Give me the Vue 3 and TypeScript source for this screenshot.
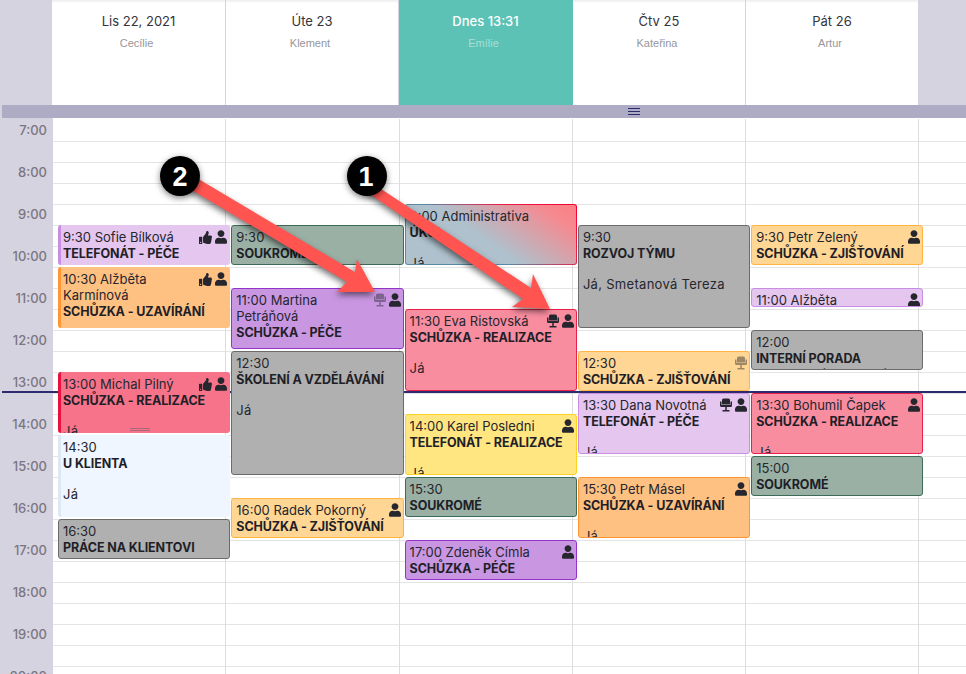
<template>
  <div class="calendar">
    <div class="head">
      <div class="corner"></div>
      <div v-for="d in days" :key="d.label" class="head-day" :class="{ today: d.today }">
        <div class="head-label">{{ d.label }}</div>
        <div class="head-name">{{ d.name }}</div>
      </div>
      <div class="corner"></div>
    </div>

    <div class="splitter">
      <svg width="12" height="8" viewBox="0 0 12 8">
        <path d="M0 .5h12M0 3.5h12M0 6.5h12" stroke="#2e2a6e" stroke-width="1" />
      </svg>
    </div>

    <div class="body">
      <div class="hours">
        <div v-for="h in hours" :key="h" class="hour">{{ h }}:00</div>
      </div>

      <div v-for="(col, i) in columns" :key="i" class="day">
        <div v-for="n in 27" :key="n" class="slot"></div>
        <div
          v-for="ev in col"
          :key="ev.time + ev.title"
          class="event"
          :class="[ev.kind, { past: ev.past }]"
          :style="eventBox(ev)"
        >
          <div class="icons">
            <svg v-if="ev.chair" class="chair" :class="{ dim: ev.dim }" viewBox="0 0 24 26">
              <path d="M7 0h10a3 3 0 0 1 3 3v9H4V3a3 3 0 0 1 3-3zM0 6h3v7h18V6h3v8a3 3 0 0 1-3 3H3a3 3 0 0 1-3-3zM10.500 17h3v6H19v3H5v-3h5.500z" />
            </svg>
            <svg v-if="ev.thumb" class="thumb" viewBox="0 0 512 512">
              <path d="M104 224H24c-13.255 0-24 10.745-24 24v240c0 13.255 10.745 24 24 24h80c13.255 0 24-10.745 24-24V248c0-13.255-10.745-24-24-24zM64 472c-13.255 0-24-10.745-24-24s10.745-24 24-24 24 10.745 24 24-10.745 24-24 24zM384 81.452c0 42.416-25.970 66.208-33.277 94.548h101.723c33.397 0 59.397 27.746 59.553 58.098.084 17.938-7.546 37.249-19.439 49.197l-.11.11c9.836 23.337 8.237 56.037-9.308 79.469 8.681 25.895-.069 57.704-16.382 74.757 4.298 17.598 2.244 32.575-6.148 44.632C440.202 511.587 389.616 512 346.839 512l-2.845-.001c-48.287-.017-87.806-17.598-119.560-31.725-15.957-7.099-36.821-15.887-52.651-16.178-6.540-.12-11.783-5.457-11.783-11.998v-213.770c0-3.200 1.282-6.271 3.558-8.521 39.614-39.144 56.648-80.587 89.117-113.111 14.804-14.832 20.188-37.236 25.393-58.902C282.515 39.293 291.817 0 312 0c24 0 72 8 72 81.452z" />
            </svg>
            <svg v-if="ev.user" class="user" viewBox="0 0 448 512">
              <path d="M224 256c70.700 0 128-57.300 128-128S294.700 0 224 0 96 57.300 96 128s57.300 128 128 128zm89.600 32h-16.700c-22.200 10.200-46.900 16-72.900 16s-50.600-5.800-72.900-16h-16.700C60.200 288 0 348.200 0 422.400V464c0 26.500 21.500 48 48 48h352c26.500 0 48-21.500 48-48v-41.600c0-74.200-60.200-134.400-134.400-134.400z" />
            </svg>
          </div>
          <div class="line">{{ headline(ev) }}</div>
          <div class="title">{{ ev.title }}</div>
          <div v-if="ev.people" class="people">{{ ev.people }}</div>
          <div v-if="ev.handle" class="handle"></div>
        </div>
      </div>

      <div class="day last">
        <div v-for="n in 27" :key="n" class="slot"></div>
      </div>

      <div class="now"></div>
    </div>

    <!-- sipky z navodu, lezi pres cely kalendar -->
    <svg class="marks" width="966" height="674" viewBox="0 0 966 674">
      <g class="arrow">
        <polygon points="180,168 355,272 357,259 375,292 337,292 347,282 173,179" />
        <polygon points="372,183 531,288 533,274 550,309 512,307 523,299 364,190" />
      </g>
      <g class="badge">
        <circle cx="180" cy="176" r="20" />
        <circle cx="367" cy="176" r="20" />
      </g>
      <text x="180" y="186" class="badge-text">2</text>
      <text x="366" y="186" class="badge-text">1</text>
    </svg>
  </div>
</template>

<script setup lang="ts">
interface CalEvent {
  start: number
  hours: number
  time: string
  name?: string
  title: string
  people?: string
  kind: string
  past?: boolean
  user?: boolean
  thumb?: boolean
  chair?: boolean
  dim?: boolean
  handle?: boolean
}

const days = [
  { label: 'Lis 22, 2021', name: 'Cecílie' },
  { label: 'Úte 23', name: 'Klement' },
  { label: 'Dnes 13:31', name: 'Emílie', today: true },
  { label: 'Čtv 25', name: 'Kateřina' },
  { label: 'Pát 26', name: 'Artur' },
]

const hours = [7, 8, 9, 10, 11, 12, 13, 14, 15, 16, 17, 18, 19, 20]

const columns: CalEvent[][] = [
  [
    { start: 9.5, hours: 1, time: '9:30', name: 'Sofie Bílková', title: 'TELEFONÁT - PÉČE', kind: 'lilac', past: true, user: true, thumb: true },
    { start: 10.5, hours: 1.5, time: '10:30', name: 'Alžběta Karmínová', title: 'SCHŮZKA - UZAVÍRÁNÍ', kind: 'orange', past: true, user: true, thumb: true },
    { start: 13, hours: 1.5, time: '13:00', name: 'Michal Pilný', title: 'SCHŮZKA - REALIZACE', people: 'Já', kind: 'rose', past: true, user: true, thumb: true, handle: true },
    { start: 14.5, hours: 2, time: '14:30', title: 'U KLIENTA', people: 'Já', kind: 'ice', past: true },
    { start: 16.5, hours: 1, time: '16:30', title: 'PRÁCE NA KLIENTOVI', kind: 'grey' },
  ],
  [
    { start: 9.5, hours: 1, time: '9:30', title: 'SOUKROMÉ', kind: 'green' },
    { start: 11, hours: 1.5, time: '11:00', name: 'Martina Petráňová', title: 'SCHŮZKA - PÉČE', kind: 'purple', user: true, chair: true, dim: true },
    { start: 12.5, hours: 3, time: '12:30', title: 'ŠKOLENÍ A VZDĚLÁVÁNÍ', people: 'Já', kind: 'grey' },
    { start: 16, hours: 1, time: '16:00', name: 'Radek Pokorný', title: 'SCHŮZKA - ZJIŠŤOVÁNÍ', kind: 'sand', user: true },
  ],
  [
    { start: 9, hours: 1.5, time: '9:00', name: 'Administrativa', title: 'ÚKOL', people: 'Já', kind: 'mixed' },
    { start: 11.5, hours: 2, time: '11:30', name: 'Eva Ristovská', title: 'SCHŮZKA - REALIZACE', people: 'Já', kind: 'pink', user: true, chair: true },
    { start: 14, hours: 1.5, time: '14:00', name: 'Karel Posledni', title: 'TELEFONÁT - REALIZACE', people: 'Já', kind: 'yellow', user: true },
    { start: 15.5, hours: 1, time: '15:30', title: 'SOUKROMÉ', kind: 'green' },
    { start: 17, hours: 1, time: '17:00', name: 'Zdeněk Címla', title: 'SCHŮZKA - PÉČE', kind: 'purple', user: true },
  ],
  [
    { start: 9.5, hours: 2.5, time: '9:30', title: 'ROZVOJ TÝMU', people: 'Já, Smetanová Tereza', kind: 'grey' },
    { start: 12.5, hours: 1, time: '12:30', title: 'SCHŮZKA - ZJIŠŤOVÁNÍ', kind: 'sand', chair: true, dim: true },
    { start: 13.5, hours: 1.5, time: '13:30', name: 'Dana Novotná', title: 'TELEFONÁT - PÉČE', people: 'Já', kind: 'lilac', user: true, chair: true },
    { start: 15.5, hours: 1.5, time: '15:30', name: 'Petr Másel', title: 'SCHŮZKA - UZAVÍRÁNÍ', people: 'Já', kind: 'orange', user: true },
  ],
  [
    { start: 9.5, hours: 1, time: '9:30', name: 'Petr Zelený', title: 'SCHŮZKA - ZJIŠŤOVÁNÍ', kind: 'sand', user: true },
    { start: 11, hours: 0.5, time: '11:00', name: 'Alžběta Karmínová', title: 'SCHŮZKA - PÉČE', kind: 'lilac', user: true },
    { start: 12, hours: 1, time: '12:00', title: 'INTERNÍ PORADA', people: 'Smetanová, Pokorný (Radek)', kind: 'grey tight' },
    { start: 13.5, hours: 1.5, time: '13:30', name: 'Bohumil Čapek', title: 'SCHŮZKA - REALIZACE', people: 'Já', kind: 'pink', user: true },
    { start: 15, hours: 1, time: '15:00', title: 'SOUKROMÉ', kind: 'green' },
  ],
]

function headline(ev: CalEvent) {
  return ev.name ? `${ev.time} ${ev.name}` : ev.time
}

// 42px na hodinu, 9:30 zacina na 106px od vrchu mrizky
function eventBox(ev: CalEvent) {
  return {
    top: 106 + (ev.start - 9.5) * 42 + 'px',
    height: ev.hours * 42 - 2 + 'px',
  }
}
</script>

<style>
html,
body {
  margin: 0;
  background: #fff;
  overflow: hidden;
}
</style>

<style scoped>
.calendar {
  position: relative;
  width: 966px;
  height: 674px;
  overflow: hidden;
  font-family: Inter, 'Noto Sans', sans-serif;
  color: #26262e;
}

.head {
  display: grid;
  grid-template-columns: 52px 174px 173px 174px 173px 172px 1fr;
  height: 105px;
}
.corner {
  background: #d6d3e0;
}
.head-day {
  border-right: 1px solid #d6d3e0;
  text-align: center;
  background: linear-gradient(#ececec, #fff 3px);
}
.head-day:nth-child(6) {
  border-right: none;
}
.head-label {
  margin-top: 12px;
  font-size: 13px;
  line-height: 18px;
  color: #34343a;
}
.head-name {
  margin-top: 6px;
  padding-right: 4px;
  font-family: 'Liberation Sans', Arial, sans-serif;
  font-size: 11px;
  line-height: 14px;
  color: #96969b;
}
.today {
  background: #5cc2b5;
  border-right-color: #5cc2b5;
}
.today .head-label {
  color: #fff;
  font-weight: 500;
}
.today .head-name {
  color: #a8dfd7;
}

.splitter {
  display: flex;
  align-items: center;
  justify-content: center;
  height: 13px;
  margin-left: 2px;
  padding-left: 300px;
  background: #aeabc4;
  box-sizing: border-box;
  box-shadow: -2px 0 0 #d6d3e0;
}
.splitter svg {
  display: block;
}

.body {
  position: relative;
  display: grid;
  grid-template-columns: 53px repeat(5, 173.3px) 1fr;
  height: 556px;
  margin-top: 1px;
}
.hours {
  background: #d6d3e0;
  box-shadow: 0 -1px 0 #d6d3e0;
}
.hour {
  box-sizing: border-box;
  height: 42px;
  padding: 3px 6px 0 0;
  font-size: 13px;
  font-weight: 500;
  line-height: 16px;
  text-align: right;
  color: #7b7680;
}

.day {
  position: relative;
  box-sizing: border-box;
  padding-top: 2px;
  border-right: 1px solid #dddddd;
}
.day.last {
  border-right: none;
}
.slot {
  box-sizing: border-box;
  height: 21px;
  border-bottom: 1px solid #e4e4e4;
}

.now {
  position: absolute;
  left: 2px;
  right: 0;
  top: 272px;
  height: 2px;
  background: #2e2a6e;
  z-index: 1;
}

.event {
  position: absolute;
  left: 5px;
  width: 100%;
  box-sizing: border-box;
  padding: 3px 4px 0;
  border: 1px solid;
  border-radius: 3px;
  overflow: hidden;
  font-size: 13px;
  line-height: 16px;
  z-index: 2;
}
.event.past {
  padding: 4px 4px 0 2px;
  border-width: 0 0 0 3px;
}
.title {
  margin: 1px 0 -1px;
  font-size: 12.5px;
  font-weight: 700;
  letter-spacing: -0.1px;
  color: #1f1f28;
}
.people {
  margin-top: 15px;
  letter-spacing: 0.3px;
}
.tight .people {
  margin-top: 0;
}

.icons {
  float: right;
  display: flex;
  gap: 3px;
  margin: 1px -2px 0 3px;
  height: 14px;
}
.past .icons {
  margin-right: -1px;
}
.icons svg {
  display: block;
  fill: #26262e;
}
.user {
  width: 12px;
  height: 14px;
}
.thumb {
  width: 13px;
  height: 13px;
  margin-top: 1px;
}
.chair {
  width: 12px;
  height: 14px;
}
.chair.dim {
  opacity: 0.45;
}

.handle {
  position: absolute;
  left: 69px;
  bottom: 2px;
  width: 20px;
  height: 3px;
  border-top: 1px solid #a86a7a;
  border-bottom: 1px solid #a86a7a;
  box-sizing: border-box;
}

.lilac { background: #e4c6ef; border-color: #c78ee3; }
.orange { background: #fec182; border-color: #ff9633; }
.rose { background: #f6738a; border-color: #e8123e; }
.ice { background: #eff6ff; border-color: #dde8f7; }
.grey { background: #b0b0b0; border-color: #6b6b6b; }
.green { background: #9ab0a5; border-color: #3d6b58; }
.purple { background: #c997e2; border-color: #9534c9; }
.sand { background: #ffd694; border-color: #ffb340; }
.pink { background: #f98da0; border-color: #e8204a; }
.yellow { background: #ffe680; border-color: #ffd21f; }
.mixed {
  border-color: transparent;
  background:
    linear-gradient(215deg, #fb7f85 0%, #f58a90 15%, #aec1cc 55%) padding-box,
    linear-gradient(215deg, #f5002d 0%, #e8204a 30%, #5b8aa5 60%) border-box;
}

.marks {
  position: absolute;
  left: 0;
  top: 0;
  z-index: 3;
  pointer-events: none;
}
.arrow {
  fill: #ff5450;
  filter: drop-shadow(-1px 3px 3px rgba(0, 0, 0, 0.55));
}
.badge {
  fill: #000;
  filter: drop-shadow(0 2px 3px rgba(0, 0, 0, 0.5));
}
.badge-text {
  fill: #fff;
  font-family: 'Liberation Sans', Arial, sans-serif;
  font-size: 27px;
  font-weight: 700;
  text-anchor: middle;
}
</style>
